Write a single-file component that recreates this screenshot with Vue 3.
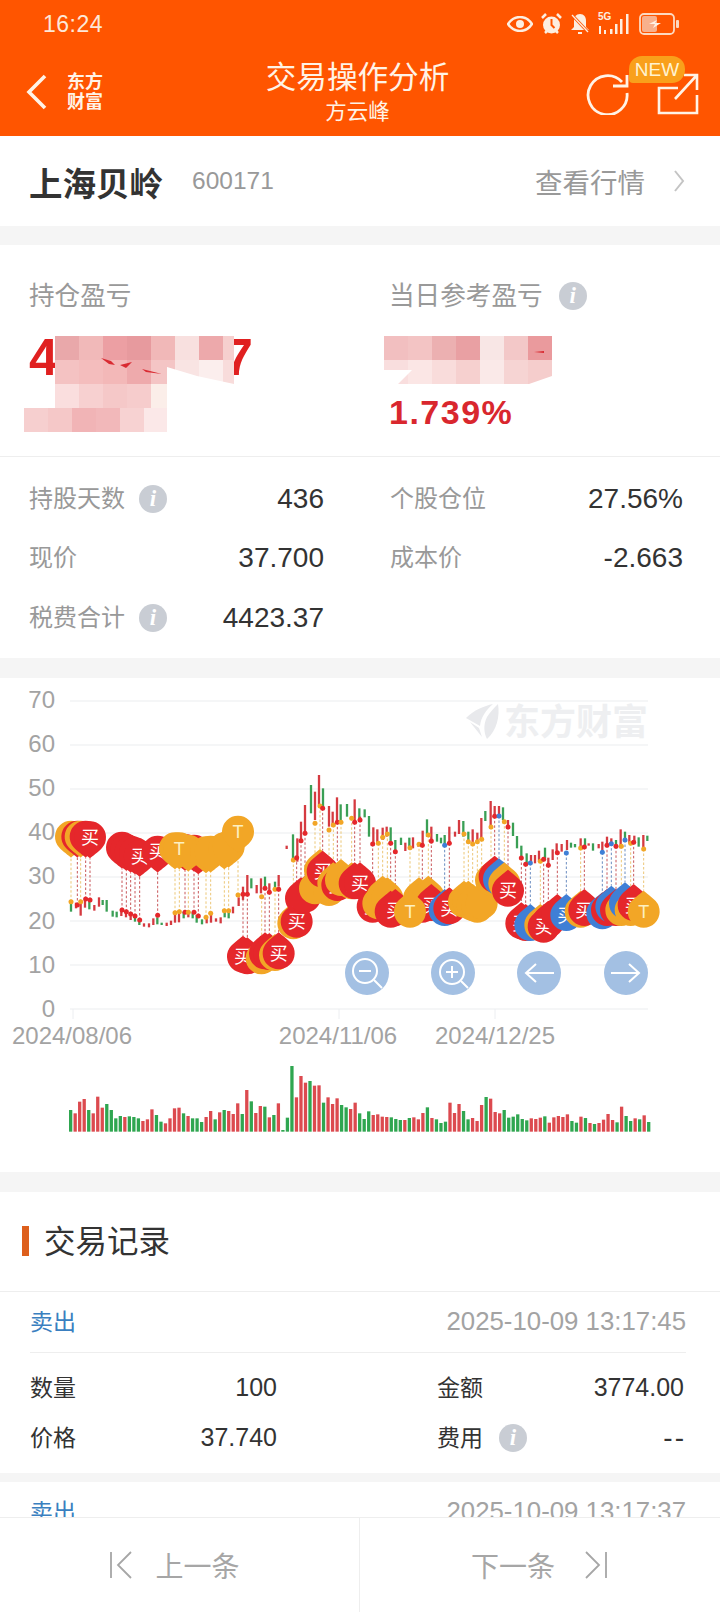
<template>
  <div class="page">
    <header class="top">
      <div class="status">
        <span class="time">16:24</span>
        <div class="status-icons">
          <svg width="26" height="16" viewBox="0 0 26 16" class="ic-eye"><path d="M1 8C5 2 9 1 13 1s8 1 12 7c-4 6-8 7-12 7S5 14 1 8z" fill="none" stroke="#fdeee0" stroke-width="2.4"/><circle cx="13" cy="8" r="4" fill="#fdeee0"/></svg>
          <svg width="21" height="22" viewBox="0 0 21 22"><circle cx="10.500" cy="12" r="8.500" fill="#fdeee0"/><path d="M10.500 6v6l3 3" stroke="#ff5500" stroke-width="2" fill="none"/><path d="M1 5l4-4M20 5l-4-4M4 20l2-2M17 20l-2-2" stroke="#fdeee0" stroke-width="2.500"/></svg>
          <svg width="20" height="22" viewBox="0 0 20 22"><path d="M10 1c4 0 6 3 6 7v6l3 3H1l3-3V8c0-4 2-7 6-7z" fill="#fdeee0"/><path d="M2 2l16 17" stroke="#ff5500" stroke-width="3"/><path d="M2 2l16 17" stroke="#fdeee0" stroke-width="1.300"/><path d="M8 19h4v2H8z" fill="#fdeee0"/></svg>
          <div class="net">
            <span class="net-5g">5G</span>
            <svg width="33" height="22" viewBox="0 0 33 22"><path d="M1 13h2v8H1zM6 17h2v4H6zM12 16h2.500v5H12zM17 11h2.500v10H17zM22 6h2.500v15H22zM28 1h2.500v20H28z" fill="#fdeee0"/></svg>
          </div>
          <svg width="41" height="22" viewBox="0 0 41 22"><rect x="1" y="1" width="34" height="20" rx="4" fill="none" stroke="#fdd9c0" stroke-width="1.800"/><rect x="3" y="3" width="15" height="16" rx="2" fill="#f8b08c"/><path d="M10 11l8-4-2 3h6l-8 5 2-4z" fill="#fff2e6"/><rect x="37" y="7" width="3" height="8" rx="1" fill="#fdd9c0"/></svg>
        </div>
      </div>
      <nav class="nav">
        <div class="nav-left">
          <svg width="22" height="36" viewBox="0 0 22 36"><path d="M19 2L3 18l16 16" fill="none" stroke="#fff3e6" stroke-width="3.600"/></svg>
          <div class="nav-logo"><span>东方</span><span>财富</span></div>
        </div>
        <div class="nav-title">
          <div class="nav-main">交易操作分析</div>
          <div class="nav-sub">方云峰</div>
        </div>
        <div class="nav-right">
          <svg width="44" height="42" viewBox="0 0 44 42"><path d="M36 9A19.500 19.500 0 1 0 41 20" fill="none" stroke="#fff3e6" stroke-width="2.800"/><path d="M41 2v11H27" fill="none" stroke="#fff3e6" stroke-width="2.800"/></svg>
          <svg width="42" height="42" viewBox="0 0 42 42"><path d="M21 15H2v25h38V22" fill="none" stroke="#fff3e6" stroke-width="2.600"/><path d="M18 26L40 2M27 2h13v15" fill="none" stroke="#fff3e6" stroke-width="2.600"/></svg>
          <span class="badge">NEW</span>
        </div>
      </nav>
    </header>

    <main class="body">
      <section class="stock">
        <b class="stock-name">上海贝岭</b>
        <span class="stock-code">600171</span>
        <span class="stock-link">查看行情</span>
        <svg width="12" height="22" viewBox="0 0 12 22"><path d="M2 1l8 10-8 10" fill="none" stroke="#c4c4c4" stroke-width="2"/></svg>
      </section>

      <section class="summary">
        <div class="pnl">
          <div class="pnl-col">
            <div class="pnl-label">持仓盈亏</div>
            <svg class="pnl-mask" width="232" height="96" viewBox="0 0 232 96">
              <text x="5" y="39" class="pnl-digit">4</text>
              <text x="200" y="39" class="pnl-digit">7</text>
              <rect v-for="(b, i) in leftBlocks" :key="i" :x="b.x" :y="b.y" :width="b.w" height="24" :fill="b.c" />
              <path d="M143 31l30 9 37 8h-67z" fill="#fff" />
              <path d="M77 22l10 3 4 4-6-1zM96 29l12-3-6 6zM118 33l20 5-16-2z" fill="#d92b32" />
            </svg>
          </div>
          <div class="pnl-col">
            <div class="pnl-label">当日参考盈亏<i class="info">i</i></div>
            <svg class="pnl-mask" width="168" height="48" viewBox="0 0 168 48">
              <rect v-for="(b, i) in rightBlocks" :key="i" :x="b.x" :y="b.y" :width="b.w" height="24" :fill="b.c" />
              <path d="M0 34h7l-4 8zM150 16l10-1 0 2z" fill="#d92b32" />
              <path d="M14 48L28 34H0v14zM145 48l23-8v8z" fill="#fff" />
            </svg>
            <div class="pnl-pct">1.739%</div>
          </div>
        </div>
        <div class="stats">
          <div class="stat" v-for="s in stats" :key="s.label" :class="{ blank: !s.label }">
            <span class="stat-label">{{ s.label }}<i class="info" v-if="s.info">i</i></span>
            <span class="stat-value">{{ s.value }}</span>
          </div>
        </div>
      </section>

      <section class="chart">
        <svg width="720" height="494" viewBox="0 678 720 494">
          <text x="504" y="735" class="mark">东方财富</text>
          <path d="M466 718C474 710 484 706 493 704 486 710 481 717 480 726zM498 704C500 716 497 730 487 739 484 733 483 725 487 717 490 712 494 708 498 704zM470 722l9 6 3 9z" fill="#e8e9ec" />
          <g v-for="(n, i) in gridVals" :key="n">
            <line x1="70" x2="648" :y1="1009 - i * 44" :y2="1009 - i * 44" stroke="#f2f3f5" stroke-width="1.500" />
            <text x="55" :y="1017 - i * 44.2" class="axis" text-anchor="end">{{ n }}</text>
          </g>
          <line v-for="x in [73, 339, 495]" :key="x" :x1="x" :x2="x" y1="1009" y2="1019" stroke="#eceef1" />
          <text x="72" y="1044" class="axis" text-anchor="middle">2024/08/06</text>
          <text x="338" y="1044" class="axis" text-anchor="middle">2024/11/06</text>
          <text x="495" y="1044" class="axis" text-anchor="middle">2024/12/25</text>

          <line v-for="(c, i) in candles" :key="'c' + i" :x1="c.x" :x2="c.x" :y1="c.y1" :y2="c.y2" :stroke="c.color" stroke-width="2.300" />
          <line v-for="(m, i) in marks" :key="'d' + i" :x1="m.x" :x2="m.x" :y1="m.dot" :y2="m.tip" :stroke="m.line" stroke-width="1" stroke-dasharray="2.500 2" />
          <circle v-for="(m, i) in marks" :key="'o' + i" :cx="m.x" :cy="m.dot" r="2.500" :fill="m.color" />
          <g v-for="(m, i) in marks" :key="'b' + i" :transform="`translate(${m.x} ${m.y})`">
            <path :d="pin" :fill="m.color" :transform="m.up ? 'scale(1 -1)' : ''" />
            <text v-if="m.label" y="6.500" text-anchor="middle" class="pin-text" :fill="m.type === 'o' ? '#fdf0c0' : '#fff'">{{ m.label }}</text>
          </g>

          <g transform="translate(367 973)">
            <circle r="22" fill="#a3c0e3" />
            <circle cx="-2" cy="-2" r="12" fill="none" stroke="#fff" stroke-width="2" />
            <path d="M7 7l8 8M-8-2h12" stroke="#fff" stroke-width="2" />
          </g>
          <g transform="translate(453 973)">
            <circle r="22" fill="#a3c0e3" />
            <circle cx="-1" cy="-1" r="12" fill="none" stroke="#fff" stroke-width="2" />
            <path d="M8 8l7 7M-7-1H5M-1-7V5" stroke="#fff" stroke-width="2" />
          </g>
          <g transform="translate(539 973)">
            <circle r="22" fill="#a3c0e3" />
            <path d="M15 0h-28M-3-9l-10 9 10 9" fill="none" stroke="#fff" stroke-width="2" />
          </g>
          <g transform="translate(626 973)">
            <circle r="22" fill="#a3c0e3" />
            <path d="M-15 0h28M3-9l10 9-10 9" fill="none" stroke="#fff" stroke-width="2" />
          </g>

          <rect v-for="(v, i) in volumes" :key="'v' + i" :x="v.x" :y="v.y" width="3.300" :height="v.h" :fill="v.color" />
        </svg>
      </section>

      <section class="records">
        <h2 class="records-title"><span>交易记录</span></h2>
        <article class="trade">
          <div class="trade-head">
            <span class="trade-side">卖出</span>
            <span class="trade-date">2025-10-09 13:17:45</span>
          </div>
          <div class="trade-grid">
            <div class="cell"><span class="cell-label">数量</span><span class="num">100</span></div>
            <div class="cell"><span class="cell-label">金额</span><span class="num">3774.00</span></div>
            <div class="cell"><span class="cell-label">价格</span><span class="num">37.740</span></div>
            <div class="cell"><span class="cell-label">费用<i class="info">i</i></span><span class="num dash">--</span></div>
          </div>
        </article>
        <article class="trade next">
          <div class="trade-head">
            <span class="trade-side">卖出</span>
            <span class="trade-date">2025-10-09 13:17:37</span>
          </div>
        </article>
      </section>
    </main>

    <footer class="foot">
      <div class="foot-btn">
        <svg width="22" height="28" viewBox="0 0 22 28"><path d="M1 1v26M21 1L8 14l13 13" fill="none" stroke="#a6a6a6" stroke-width="1.800"/></svg>
        <span>上一条</span>
      </div>
      <div class="foot-btn">
        <span>下一条</span>
        <svg width="22" height="28" viewBox="0 0 22 28"><path d="M21 1v26M1 1l13 13L1 27" fill="none" stroke="#a6a6a6" stroke-width="1.800"/></svg>
      </div>
    </footer>
  </div>
</template>

<script setup>
const stats = [
  { label: '持股天数', value: '436', info: true },
  { label: '个股仓位', value: '27.56%' },
  { label: '现价', value: '37.700' },
  { label: '成本价', value: '-2.663' },
  { label: '税费合计', value: '4423.37', info: true },
  { label: '', value: '' }
]

const gridVals = [0, 10, 20, 30, 40, 50, 60, 70]

// 打码色块 [x, y, 右边界, 颜色]
function blocks(rows) {
  const out = []
  rows.forEach(([x, y, end, colors]) => {
    colors.forEach((c, i) => {
      const left = x + i * 24
      out.push({ x: left, y, w: Math.min(24, end - left), c })
    })
  })
  return out
}
const leftBlocks = blocks([
  [31, 0, 210, ['#e9a8aa', '#f1b9b9', '#ec9fa3', '#e79a9e', '#f1b8b8', '#f8e0df', '#eda9ab', '#f6cfce']],
  [31, 24, 210, ['#f4c2c2', '#f4bdbd', '#f3b8b8', '#eeaaac', '#f4c5c5', '#f9e4e3', '#fbeeed', '#f8dcdb']],
  [31, 48, 143, ['#fadede', '#f7d0d0', '#f5c8c8', '#f6cccc', '#fbeee9']],
  [0, 72, 143, ['#f6cfcf', '#f5c8c8', '#f1b4b6', '#f2b8ba', '#f7d2d2', '#fbe8e8']]
])
const rightBlocks = blocks([
  [0, 0, 168, ['#f2bfc0', '#f3c4c4', '#ecb0b1', '#e9a0a3', '#f8e6e5', '#f3c8c8', '#ea9a9d']],
  [0, 24, 168, ['#f9dede', '#fbe6e5', '#f9dcdb', '#f6d0cf', '#fae9e8', '#f6d4d3', '#f5cdcc']]
])

// K线：放大图坐标 [x, 上, 下, 颜色]
const rawLeft = [
  [213,672,695,'g'],[228,668,685,'r'],[242,660,707,'r'],[255,655,683,'r'],[268,665,688,'g'],[283,675,692,'r'],[297,652,680,'r'],[308,660,675,'g'],[320,660,695,'g'],
  [338,692,710,'g'],[350,695,712,'g'],[364,688,708,'r'],[378,692,712,'r'],[392,700,720,'r'],[405,705,725,'g'],[418,715,735,'g'],[432,730,740,'r'],[447,730,742,'r'],
  [460,715,735,'r'],[472,712,733,'g'],[485,728,735,'g'],[500,728,738,'r'],[513,722,735,'r'],[525,705,728,'r'],[537,702,727,'r'],[551,695,715,'g'],[565,695,712,'r'],
  [578,698,715,'g'],[590,705,728,'g'],[606,718,733,'g'],[620,708,730,'r'],[633,705,728,'r'],[648,715,725,'r'],[662,712,730,'r'],[674,695,712,'g'],[686,690,715,'g'],
  [699,680,700,'r'],[716,652,678,'r'],[729,620,660,'r'],[742,585,640,'r'],[754,595,625,'g'],[770,615,640,'r'],[783,595,640,'r'],[795,590,620,'g'],[808,610,640,'r'],
  [825,605,625,'g'],[836,585,620,'r'],[860,497,507,'r'],[879,463,535,'g'],[892,475,545,'r'],[903,425,480,'r'],[915,375,460,'r'],[933,315,400,'g'],[945,335,420,'r'],
  [957,285,375,'r'],[969,325,385,'g'],[987,378,440,'r'],[998,395,440,'r'],[1011,352,425,'r'],[1022,373,425,'g'],[1041,372,410,'g'],[1064,358,425,'r'],[1078,385,420,'g']
]
const rawRight = [
  [0,410,425,'r'],[14,388,412,'g'],[27,408,470,'g'],[40,442,490,'r'],[52,448,490,'r'],[68,443,480,'r'],[80,440,470,'r'],[92,442,490,'g'],[106,480,510,'g'],[123,473,495,'g'],
  [136,488,513,'r'],[148,473,500,'g'],[159,472,505,'r'],[175,490,500,'r'],[188,452,495,'r'],[201,418,470,'g'],[214,440,490,'r'],[231,462,485,'g'],[243,473,490,'g'],[254,465,495,'g'],
  [268,440,490,'r'],[285,455,470,'r'],[297,420,462,'r'],[310,423,470,'g'],[325,455,490,'g'],[338,448,495,'r'],[352,458,490,'r'],[364,414,475,'r'],[376,393,423,'g'],[392,363,437,'r'],
  [404,378,410,'r'],[417,378,410,'r'],[429,382,420,'g'],[444,420,445,'r'],[459,428,468,'g'],[471,468,505,'g'],[484,497,535,'g'],[500,520,555,'g'],[513,525,552,'r'],[525,525,550,'r'],
  [537,512,545,'r'],[555,503,535,'g'],[565,533,560,'r'],[578,508,540,'r'],[590,490,520,'r'],[605,492,515,'r'],[621,480,510,'r'],[633,488,503,'g'],[645,492,502,'g'],[662,475,510,'r'],
  [675,475,505,'g'],[686,490,497,'r'],[699,490,512,'g'],[716,492,505,'r'],[727,485,515,'r'],[741,470,500,'r'],[754,475,492,'r'],[768,480,505,'g'],[782,448,505,'r'],[795,455,485,'g'],
  [808,465,490,'r'],[823,467,490,'r'],[836,472,500,'g'],[850,465,503,'r'],[862,467,483,'g']
]
const UP = '#d53a40'
const DOWN = '#3a9f55'
const candles = [
  ...rawLeft.map(c => ({ x: c[0] / 3, y1: 680 + c[1] / 3, y2: 680 + c[2] / 3, color: c[3] === 'r' ? UP : DOWN })),
  ...rawRight.map(c => ({ x: 360 + c[0] / 3, y1: 680 + c[1] / 3, y2: 680 + c[2] / 3, color: c[3] === 'r' ? UP : DOWN }))
]

// 买卖点气泡 [x, 点y, 气泡y, 类型, 文字被盖住时为0]
const rawMarksLeft = [
  [213,665,470,'o',0],[232,675,470,'r',0],[242,665,470,'o',0],[257,657,470,'r',0],[270,660,472,'r'],
  [366,690,503,'r',0],[379,695,510,'r',0],[392,702,515,'r',0],[405,708,520,'r',0],[419,720,528,'r'],[473,706,515,'r'],
  [555,697,510,'r',0],[582,697,512,'r',0],[595,708,520,'r',0],[565,697,512,'o',0],[525,698,505,'o',0],[538,695,505,'o'],
  [618,712,517,'o',0],[632,700,515,'o',0],[673,692,505,'o',0],[686,692,500,'o',0],[714,645,455,'o'],
  [742,643,835,'r',0],[729,643,830,'r'],[785,650,835,'o',0],[795,625,820,'r',0],[808,637,822,'r',0],[825,628,825,'o',0],[836,628,820,'r'],
  [880,540,730,'o',0],[890,533,725,'r'],[903,482,655,'r'],[915,460,650,'r',0],[945,430,625,'o',0],[987,450,630,'o',0],[960,378,570,'o',0],[968,385,575,'r'],
  [1000,435,610,'o',0],[1012,427,615,'r'],[1023,427,600,'o',0],[1055,415,610,'o',0],[1064,427,610,'r']
]
const rawMarksRight = [
  [0,420,610,'r'],[38,492,680,'r'],[55,490,670,'o',0],[68,472,650,'o',0],[82,462,655,'o',0],[92,490,695,'r',0],[106,515,690,'r'],
  [177,493,655,'o',0],[187,496,680,'r'],[205,465,650,'o',0],[214,483,675,'r'],[150,503,695,'o'],[254,496,690,'b',0],[268,490,685,'r'],
  [312,462,665,'o',0],[325,485,665,'o',0],[338,492,675,'o',0],[352,485,680,'o',0],[365,478,670,'o',0],
  [393,441,600,'o',0],[404,409,590,'r',0],[417,408,598,'b',0],[433,425,610,'o',0],[444,441,632,'r'],
  [497,553,735,'r',0],[484,534,730,'r'],[511,549,735,'b',0],[541,544,735,'o',0],[565,556,725,'r',0],[551,538,740,'r'],[592,518,705,'r',0],[619,519,705,'b'],
  [662,504,695,'o',0],[673,501,690,'r'],[727,517,700,'b',0],[741,496,690,'r',0],[754,491,680,'b',0],[768,499,690,'r',0],[784,499,690,'o',0],[795,480,670,'b',0],
  [812,490,690,'o',0],[821,487,675,'r'],[851,507,695,'o']
]
const markColors = { r: '#e5272b', o: '#f2a626', b: '#3f7fd6' }
const lineColors = { r: '#c8575a', o: '#ecc777', b: '#6a8cc0' }
function toMark(m, ox) {
  const dot = 680 + m[1] / 3
  const y = 680 + m[2] / 3
  const up = y > dot
  return {
    x: ox + m[0] / 3,
    dot,
    y,
    up,
    tip: up ? y - 21 : y + 21,
    type: m[3],
    color: markColors[m[3]],
    line: lineColors[m[3]],
    label: m[4] === 0 ? '' : (m[3] === 'o' ? 'T' : '买')
  }
}
const marks = [...rawMarksLeft.map(m => toMark(m, 0)), ...rawMarksRight.map(m => toMark(m, 360))]
const pin = 'M0 21C-2 19-8 15-12 10.600A16 16 0 1 1 12 10.600C8 15 2 19 0 21Z'

// 成交量
const volRaw = 'g210 r220 r185 r177 g210 r220 r170 r203 g192 g210 g235 g228 r231 g229 g231 g235 r243 r238 r208 g225 g245 r250 r235 r205 r203 g220 r228 g235 g235 g246 r231 r213 g238 r217 g210 r213 r222 r190 g222 r150 g184 r219 r198 g200 r232 g225 r190 g270 g233 g78 r172 r108 r128 g123 r137 r136 g188 r172 r192 r175 g195 g202 r207 r188 ' +
  'g220 g237 g214 r225 r223 r230 r231 g232 g237 g240 r240 g234 r232 r238 r219 g202 r234 g238 g249 g245 r188 r219 r192 g213 g238 r234 r243 r195 g171 r176 r216 r220 g210 g233 g230 g223 g237 g241 r235 r237 r233 g229 r248 r232 r228 r231 r223 g243 g248 r230 g234 r249 g252 r249 r239 r222 r240 g247 r200 g228 g243 r235 g238 r226 g246'
const volumes = volRaw.split(' ').map((s, i) => {
  const top = Number(s.slice(1))
  return {
    x: 69 + i * 4.516,
    y: 1040 + top / 3,
    h: (275 - top) / 3,
    color: s[0] === 'r' ? '#dc4a4f' : '#2fa650'
  }
})
</script>

<style scoped>
.page {
  width: 720px;
  height: 1612px;
  display: flex;
  flex-direction: column;
  overflow: hidden;
  background: #f5f5f5;
  font-family: "Liberation Sans", "Noto Sans CJK SC", sans-serif;
}

/* 顶部 */
.top {
  background: #ff5500;
  height: 136px;
  flex: none;
  color: #fff3e6;
}
.status {
  height: 48px;
  display: flex;
  align-items: center;
  justify-content: space-between;
  padding: 0 40px 0 43px;
}
.time {
  font-size: 23px;
  letter-spacing: 0.5px;
  color: #fde8d8;
}
.status-icons {
  display: flex;
  align-items: center;
  gap: 8px;
}
.net {
  position: relative;
  width: 33px;
  height: 22px;
}
.net svg {
  display: block;
}
.net-5g {
  position: absolute;
  left: 0;
  top: -2px;
  font-size: 10px;
  font-weight: bold;
  color: #fdeee0;
}
.nav {
  height: 88px;
  display: grid;
  grid-template-columns: 1fr auto 1fr;
  align-items: center;
  padding: 0 21px 0 26px;
}
.nav-left {
  display: flex;
  align-items: center;
  gap: 19px;
}
.nav-left svg {
  flex: none;
}
.nav-logo {
  display: flex;
  flex-direction: column;
  font-size: 18px;
  line-height: 20px;
  font-weight: bold;
}
.nav-title {
  text-align: center;
  transform: translateX(-5px);
}
.nav-main {
  font-size: 30.600px;
  line-height: 36px;
}
.nav-sub {
  font-size: 21.500px;
  line-height: 28px;
  padding-top: 3px;
}
.nav-right {
  position: relative;
  display: flex;
  justify-content: flex-end;
  align-items: center;
  gap: 27px;
  margin-top: 4px;
}
.badge {
  position: absolute;
  right: 14px;
  top: -17px;
  width: 56px;
  height: 27px;
  border-radius: 13px 13px 13px 4px;
  background: #f9a01b;
  color: #fff3d0;
  font-size: 19px;
  line-height: 27px;
  text-align: center;
}

.body {
  flex: 1;
  min-height: 0;
  overflow: hidden;
}

/* 股票 */
.stock {
  height: 90px;
  background: #fff;
  display: flex;
  align-items: center;
  padding: 0 35px 0 29px;
  margin-bottom: 19px;
}
.stock-name {
  font-size: 33.500px;
  color: #333;
}
.stock-code {
  font-size: 24.500px;
  color: #999;
  margin-left: 29px;
}
.stock-link {
  margin-left: auto;
  margin-right: 28px;
  font-size: 27.500px;
  color: #999;
}

/* 盈亏 */
.summary {
  background: #fff;
  margin-bottom: 20px;
}
.pnl {
  height: 212px;
  display: grid;
  grid-template-columns: 360px 1fr;
  padding: 37px 0 0 29px;
  box-sizing: border-box;
  border-bottom: 1px solid #eee;
}
.pnl-label {
  display: flex;
  align-items: center;
  font-size: 25.600px;
  line-height: 28px;
  color: #999;
  margin-bottom: 26px;
}
.pnl-label .info {
  margin-left: 16px;
}
.pnl-mask {
  display: block;
  margin-left: -5px;
}
.pnl-digit {
  font-size: 52px;
  font-weight: bold;
  fill: #e02020;
}
.pnl-pct {
  margin-top: 10px;
  font-size: 34px;
  line-height: 36px;
  font-weight: bold;
  letter-spacing: 1.500px;
  color: #d9272e;
}
.info {
  display: inline-flex;
  flex: none;
  align-items: center;
  justify-content: center;
  width: 28px;
  height: 28px;
  border-radius: 50%;
  background: #c9cdd4;
  color: #fff;
  font-family: "Liberation Serif", serif;
  font-size: 23px;
  font-weight: bold;
  font-style: italic;
}
.stats {
  display: grid;
  grid-template-columns: 295px 293px;
  column-gap: 66px;
  grid-auto-rows: 59.500px;
  padding: 12px 0 10px 29px;
}
.stat {
  display: flex;
  align-items: center;
  justify-content: space-between;
}
.stat-label {
  display: flex;
  align-items: center;
  font-size: 24px;
  line-height: 28px;
  color: #999;
}
.stat-label .info {
  margin-left: 14px;
}
.stat-value {
  font-size: 28px;
  color: #333;
}

/* 图表 */
.chart {
  height: 494px;
  background: #fff;
  margin-bottom: 20px;
}
.chart svg {
  display: block;
}
.axis {
  font-size: 24px;
  fill: #a3a3a3;
}
.mark {
  font-size: 36px;
  font-weight: bold;
  fill: #eeeff1;
}
.pin-text {
  font-size: 18px;
}

/* 交易记录 */
.records {
  background: #f5f5f5;
}
.records-title {
  margin: 0;
  height: 100px;
  background: #fff;
  display: flex;
  align-items: center;
  padding-left: 22px;
  font-size: 31.500px;
  font-weight: normal;
  color: #333;
  border-bottom: 1px solid #eee;
  box-sizing: border-box;
}
.records-title span {
  padding-bottom: 4px;
}
.records-title::before {
  content: "";
  width: 7px;
  height: 30px;
  background: #dd5f1c;
  margin-right: 15px;
}
.trade {
  background: #fff;
  padding: 0 34px 0 30px;
  margin-bottom: 9px;
}
.trade-head {
  height: 60px;
  display: flex;
  align-items: center;
  justify-content: space-between;
  border-bottom: 1px solid #eee;
}
.trade-side {
  font-size: 23px;
  color: #3a7fc0;
  padding-bottom: 4px;
}
.trade-date {
  font-size: 25.800px;
  color: #a3a3a3;
}
.trade-grid {
  display: grid;
  grid-template-columns: 247px 247px;
  column-gap: 160px;
  grid-auto-rows: 50px;
  padding: 10px 0 10px;
}
.cell {
  display: flex;
  align-items: center;
  justify-content: space-between;
  font-size: 23px;
  color: #333;
}
.cell-label {
  display: flex;
  align-items: center;
  line-height: 28px;
}
.cell .info {
  margin-left: 16px;
}
.num {
  font-size: 25px;
}
.dash {
  font-size: 28px;
  letter-spacing: 2px;
  margin-right: -2px;
}

/* 底部 */
.foot {
  height: 95px;
  flex: none;
  display: grid;
  grid-template-columns: 360px 360px;
  background: #fff;
  border-top: 1px solid #eee;
  box-sizing: border-box;
}
.foot-btn {
  display: flex;
  align-items: center;
  justify-content: center;
  gap: 30px;
  font-size: 28px;
  color: #a6a6a6;
  padding-right: 2px;
}
.foot-btn:first-child {
  border-right: 1px solid #eee;
  gap: 23px;
  padding-right: 9px;
}
</style>
